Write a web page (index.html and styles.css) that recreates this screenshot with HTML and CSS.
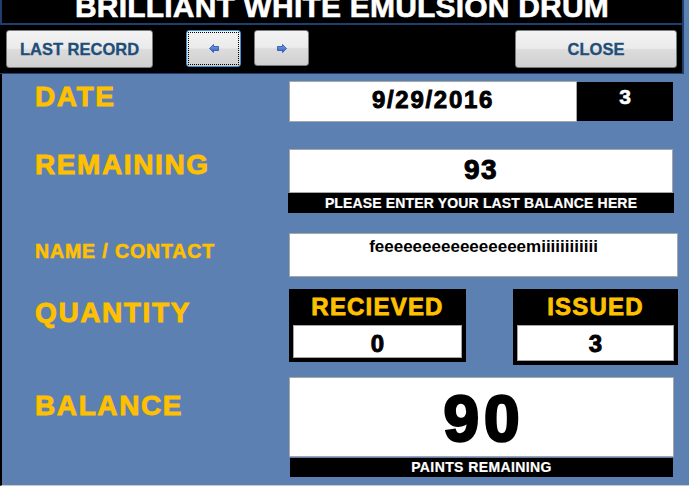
FILE: index.html
```html
<!DOCTYPE html>
<html lang="en">
<head>
<meta charset="utf-8">
<title>Brilliant White Emulsion Drum</title>
<link rel="stylesheet" href="styles.css">
</head>
<body>
<div class="app">
  <header class="title-bar">
    <h1 class="title">BRILLIANT WHITE EMULSION DRUM</h1>
  </header>
  <nav class="toolbar">
    <button class="btn btn-record">LAST RECORD</button>
    <button class="btn btn-arrow btn-prev is-focused" aria-label="Previous">
      <svg width="10" height="9" viewBox="0 0 10 9"><defs><linearGradient id="ga" x1="0" y1="0" x2="0" y2="1"><stop offset="0" stop-color="#7aa6f2"/><stop offset="1" stop-color="#2b59c4"/></linearGradient></defs><path d="M0.5 4.5 L4.5 0.5 L4.5 2.5 L9.5 2.5 L9.5 6.5 L4.5 6.5 L4.5 8.5 Z" fill="url(#ga)" stroke="#2a4f9e" stroke-width="0.8" stroke-linejoin="round"/></svg>
    </button>
    <button class="btn btn-arrow btn-next" aria-label="Next">
      <svg width="10" height="9" viewBox="0 0 10 9"><defs><linearGradient id="gb" x1="0" y1="0" x2="0" y2="1"><stop offset="0" stop-color="#7aa6f2"/><stop offset="1" stop-color="#2b59c4"/></linearGradient></defs><path d="M9.5 4.5 L5.5 0.5 L5.5 2.5 L0.5 2.5 L0.5 6.5 L5.5 6.5 L5.5 8.5 Z" fill="url(#gb)" stroke="#2a4f9e" stroke-width="0.8" stroke-linejoin="round"/></svg>
    </button>
    <button class="btn btn-close">CLOSE</button>
  </nav>
  <main class="form">
    <section class="row row-date">
      <div class="label label-lg">DATE</div>
      <div class="field-date">
        <div class="date-box">9/29/2016</div>
        <div class="count-box">3</div>
      </div>
    </section>
    <section class="row row-remaining">
      <div class="label label-lg">REMAINING</div>
      <div class="field-remaining">
        <div class="remaining-box">93</div>
        <div class="note-bar note-remaining">PLEASE ENTER YOUR LAST BALANCE HERE</div>
      </div>
    </section>
    <section class="row row-name">
      <div class="label label-sm">NAME / CONTACT</div>
      <div class="name-box">feeeeeeeeeeeeeeeemiiiiiiiiiiii</div>
    </section>
    <section class="row row-qty">
      <div class="label label-lg">QUANTITY</div>
      <div class="qty-group">
        <div class="qty-box qty-received">
          <div class="qty-title">RECIEVED</div>
          <div class="qty-value">0</div>
        </div>
        <div class="qty-box qty-issued">
          <div class="qty-title">ISSUED</div>
          <div class="qty-value">3</div>
        </div>
      </div>
    </section>
    <section class="row row-balance">
      <div class="label label-lg">BALANCE</div>
      <div class="field-balance">
        <div class="balance-box">90</div>
        <div class="note-bar note-balance">PAINTS REMAINING</div>
      </div>
    </section>
  </main>
</div>
</body>
</html>
```
FILE: styles.css
```css
* { box-sizing: border-box; }
html, body { margin: 0; padding: 0; }
body {
  width: 689px;
  height: 486px;
  overflow: hidden;
  background: #5d80b3;
  font-family: "Liberation Sans", Arial, sans-serif;
}
.app {
  width: 689px;
  height: 486px;
  display: flex;
  flex-direction: column;
}

/* Title */
.title-bar {
  width: 684px;
  height: 25px;
  flex: none;
  background: #000;
  border: 2px solid #1f3e6e;
  border-top: 0;
  overflow: hidden;
}
.title {
  margin: 0;
  color: #fff;
  text-align: center;
  font-size: 30px;
  font-weight: bold;
  line-height: 14px;
  letter-spacing: 0.2px;
  -webkit-text-stroke: 0.6px #fff;
}

/* Toolbar */
.toolbar {
  width: 684px;
  height: 49px;
  flex: none;
  background: #000;
  border-right: 2px solid #1f3e6e;
  border-bottom: 1px solid #1f3e6e;
  display: flex;
  align-items: flex-start;
  padding: 5px 5px 0 6px;
}
.btn {
  display: flex;
  align-items: center;
  justify-content: center;
  padding: 0;
  border: 1px solid #7a7a7a;
  border-radius: 3px;
  background: linear-gradient(#f3f3f3 0%, #ebebeb 48%, #dcdcdc 52%, #d0d0d0 100%);
  color: #1f4e79;
  font-family: "Liberation Sans", Arial, sans-serif;
  font-weight: bold;
  font-size: 16.5px;
  line-height: 1;
  -webkit-text-stroke: 0.3px #1f4e79;
}
.btn-record { width: 147px; height: 38px; }
.btn-arrow { width: 55px; height: 37px; }
.btn-prev { margin-left: 33px; }
.btn-next { margin-left: 13px; height: 36px; }
.btn-close { width: 162px; height: 38px; margin-left: auto; }
.is-focused {
  border-color: #3a8fd6;
  outline: 1px dotted #000;
  outline-offset: -3px;
}
.btn svg { display: block; }

/* Form */
.form {
  flex: 1;
  border-left: 2px solid #000;
  border-bottom: 1px solid #c9c9c9;
  padding: 7px 0 0 33px;
}
.row {
  display: grid;
  grid-template-columns: 254px auto;
  align-items: start;
}
.row-date { margin-bottom: 27px; }
.row-remaining { margin-bottom: 20px; }
.row-name { margin-bottom: 12px; }
.row-qty { margin-bottom: 12px; }

.label {
  color: #ffc000;
  font-weight: bold;
  -webkit-text-stroke: 0.9px #ffc000;
}
.label-lg {
  font-size: 28px;
  line-height: 28px;
  letter-spacing: 1.6px;
}
.label-sm {
  font-size: 19.5px;
  line-height: 20px;
  letter-spacing: 0.9px;
  -webkit-text-stroke: 0.6px #ffc000;
  margin-top: 8px;
}
.row-date .label { margin-top: 2px; }
.row-remaining .label { margin-top: 2px; }
.row-qty .label { margin-top: 10px; }
.row-balance .label { margin-top: 15px; }

/* Date */
.field-date { display: flex; align-items: flex-start; }
.date-box {
  width: 288px;
  height: 41px;
  background: #fff;
  border: 1px solid #a6a6a6;
  text-align: center;
  font-size: 24px;
  line-height: 24px;
  padding-top: 6px;
  font-weight: bold;
  letter-spacing: 1.7px;
  -webkit-text-stroke: 0.9px #000;
  color: #000;
}
.count-box {
  width: 96px;
  height: 39px;
  margin-top: 1px;
  background: #000;
  color: #fff;
  text-align: center;
  font-size: 21px;
  line-height: 20px;
  padding-top: 5px;
  font-weight: bold;
  -webkit-text-stroke: 0.6px #fff;
}

/* Remaining */
.field-remaining { width: 385px; }
.remaining-box {
  width: 384px;
  height: 44px;
  background: #fff;
  border: 1px solid #a6a6a6;
  text-align: center;
  font-size: 28px;
  line-height: 28px;
  padding-top: 6px;
  font-weight: bold;
  letter-spacing: 1.5px;
  -webkit-text-stroke: 1px #000;
  color: #000;
}
.note-bar {
  background: #000;
  color: #fff;
  text-align: center;
  font-weight: bold;
  font-size: 14px;
  line-height: 14px;
  padding-top: 2px;
  -webkit-text-stroke: 0.2px #fff;
}
.note-remaining {
  width: 386px;
  height: 20px;
  margin-left: -1px;
  padding-top: 3px;
  letter-spacing: 0.15px;
}

/* Name */
.name-box {
  width: 389px;
  height: 44px;
  background: #fff;
  border: 1px solid #a6a6a6;
  text-align: center;
  font-size: 17px;
  line-height: 18px;
  padding-top: 4px;
  font-weight: bold;
  color: #000;
}

/* Quantity */
.qty-group {
  width: 389px;
  display: flex;
  justify-content: space-between;
  align-items: flex-start;
}
.qty-box {
  background: #000;
  padding: 0 4px 4px;
}
.qty-received { width: 177px; height: 73px; }
.qty-issued { width: 165px; height: 76px; }
.qty-title {
  height: 36px;
  padding-top: 6px;
  text-align: center;
  color: #ffc000;
  font-weight: bold;
  font-size: 24px;
  line-height: 24px;
  letter-spacing: 1.2px;
  -webkit-text-stroke: 0.8px #ffc000;
}
.qty-value {
  height: 33px;
  background: #fff;
  border: 1px solid #a6a6a6;
  text-align: center;
  font-weight: bold;
  font-size: 24px;
  line-height: 24px;
  padding-top: 6px;
  -webkit-text-stroke: 0.9px #000;
  color: #000;
}
.qty-issued .qty-value { height: 36px; }

/* Balance */
.field-balance { width: 385px; }
.balance-box {
  width: 385px;
  height: 80px;
  background: #fff;
  border: 1px solid #a6a6a6;
  text-align: center;
  font-weight: bold;
  font-size: 64px;
  line-height: 64px;
  padding-top: 9px;
  letter-spacing: 5px;
  text-indent: 5px;
  -webkit-text-stroke: 2.6px #000;
  color: #000;
}
.note-balance {
  width: 383px;
  height: 19px;
  margin: 1px 0 0 1px;
  font-size: 14px;
  letter-spacing: 0.4px;
}
```
